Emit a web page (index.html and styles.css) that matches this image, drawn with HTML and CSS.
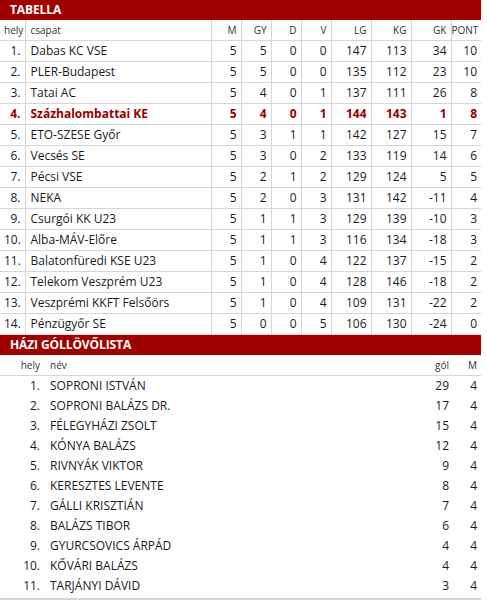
FILE: index.html
```html
<!DOCTYPE html>
<html lang="hu">
<head>
<meta charset="utf-8">
<title>Tabella</title>
<link rel="stylesheet" href="styles.css">
</head>
<body>
<div class="bar">TABELLA</div>
<table class="standings">
  <colgroup>
    <col class="c-pos"><col class="c-team"><col class="c-n"><col class="c-n"><col class="c-n"><col class="c-n"><col class="c-g"><col class="c-g"><col class="c-g"><col class="c-pt">
  </colgroup>
  <thead>
    <tr><th class="num">hely</th><th class="left">csapat</th><th class="num">M</th><th class="num">GY</th><th class="num">D</th><th class="num">V</th><th class="num">LG</th><th class="num">KG</th><th class="num">GK</th><th class="num">PONT</th></tr>
  </thead>
  <tbody>
    <tr><td class="num">1.</td><td class="team">Dabas KC VSE</td><td class="num">5</td><td class="num">5</td><td class="num">0</td><td class="num">0</td><td class="num">147</td><td class="num">113</td><td class="num">34</td><td class="num">10</td></tr>
    <tr><td class="num">2.</td><td class="team">PLER-Budapest</td><td class="num">5</td><td class="num">5</td><td class="num">0</td><td class="num">0</td><td class="num">135</td><td class="num">112</td><td class="num">23</td><td class="num">10</td></tr>
    <tr><td class="num">3.</td><td class="team">Tatai AC</td><td class="num">5</td><td class="num">4</td><td class="num">0</td><td class="num">1</td><td class="num">137</td><td class="num">111</td><td class="num">26</td><td class="num">8</td></tr>
    <tr class="own"><td class="num">4.</td><td class="team">Százhalombattai KE</td><td class="num">5</td><td class="num">4</td><td class="num">0</td><td class="num">1</td><td class="num">144</td><td class="num">143</td><td class="num">1</td><td class="num">8</td></tr>
    <tr><td class="num">5.</td><td class="team">ETO-SZESE Győr</td><td class="num">5</td><td class="num">3</td><td class="num">1</td><td class="num">1</td><td class="num">142</td><td class="num">127</td><td class="num">15</td><td class="num">7</td></tr>
    <tr><td class="num">6.</td><td class="team">Vecsés SE</td><td class="num">5</td><td class="num">3</td><td class="num">0</td><td class="num">2</td><td class="num">133</td><td class="num">119</td><td class="num">14</td><td class="num">6</td></tr>
    <tr><td class="num">7.</td><td class="team">Pécsi VSE</td><td class="num">5</td><td class="num">2</td><td class="num">1</td><td class="num">2</td><td class="num">129</td><td class="num">124</td><td class="num">5</td><td class="num">5</td></tr>
    <tr><td class="num">8.</td><td class="team">NEKA</td><td class="num">5</td><td class="num">2</td><td class="num">0</td><td class="num">3</td><td class="num">131</td><td class="num">142</td><td class="num">-11</td><td class="num">4</td></tr>
    <tr><td class="num">9.</td><td class="team">Csurgói KK U23</td><td class="num">5</td><td class="num">1</td><td class="num">1</td><td class="num">3</td><td class="num">129</td><td class="num">139</td><td class="num">-10</td><td class="num">3</td></tr>
    <tr><td class="num">10.</td><td class="team">Alba-MÁV-Előre</td><td class="num">5</td><td class="num">1</td><td class="num">1</td><td class="num">3</td><td class="num">116</td><td class="num">134</td><td class="num">-18</td><td class="num">3</td></tr>
    <tr><td class="num">11.</td><td class="team">Balatonfüredi KSE U23</td><td class="num">5</td><td class="num">1</td><td class="num">0</td><td class="num">4</td><td class="num">122</td><td class="num">137</td><td class="num">-15</td><td class="num">2</td></tr>
    <tr><td class="num">12.</td><td class="team">Telekom Veszprém U23</td><td class="num">5</td><td class="num">1</td><td class="num">0</td><td class="num">4</td><td class="num">128</td><td class="num">146</td><td class="num">-18</td><td class="num">2</td></tr>
    <tr><td class="num">13.</td><td class="team">Veszprémi KKFT Felsőörs</td><td class="num">5</td><td class="num">1</td><td class="num">0</td><td class="num">4</td><td class="num">109</td><td class="num">131</td><td class="num">-22</td><td class="num">2</td></tr>
    <tr><td class="num">14.</td><td class="team">Pénzügyőr SE</td><td class="num">5</td><td class="num">0</td><td class="num">0</td><td class="num">5</td><td class="num">106</td><td class="num">130</td><td class="num">-24</td><td class="num">0</td></tr>
  </tbody>
</table>
<div class="bar">HÁZI GÓLLÖVŐLISTA</div>
<table class="scorers">
  <colgroup>
    <col class="s-pos"><col class="s-name"><col class="s-goal"><col class="s-m">
  </colgroup>
  <thead>
    <tr><th class="num">hely</th><th class="left">név</th><th class="num">gól</th><th class="num">M</th></tr>
  </thead>
  <tbody>
    <tr><td class="num">1.</td><td class="name">SOPRONI ISTVÁN</td><td class="num">29</td><td class="num">4</td></tr>
    <tr><td class="num">2.</td><td class="name">SOPRONI BALÁZS DR.</td><td class="num">17</td><td class="num">4</td></tr>
    <tr><td class="num">3.</td><td class="name">FÉLEGYHÁZI ZSOLT</td><td class="num">15</td><td class="num">4</td></tr>
    <tr><td class="num">4.</td><td class="name">KÓNYA BALÁZS</td><td class="num">12</td><td class="num">4</td></tr>
    <tr><td class="num">5.</td><td class="name">RIVNYÁK VIKTOR</td><td class="num">9</td><td class="num">4</td></tr>
    <tr><td class="num">6.</td><td class="name">KERESZTES LEVENTE</td><td class="num">8</td><td class="num">4</td></tr>
    <tr><td class="num">7.</td><td class="name">GÁLLI KRISZTIÁN</td><td class="num">7</td><td class="num">4</td></tr>
    <tr><td class="num">8.</td><td class="name">BALÁZS TIBOR</td><td class="num">6</td><td class="num">4</td></tr>
    <tr><td class="num">9.</td><td class="name">GYURCSOVICS ÁRPÁD</td><td class="num">4</td><td class="num">4</td></tr>
    <tr><td class="num">10.</td><td class="name">KŐVÁRI BALÁZS</td><td class="num">4</td><td class="num">4</td></tr>
    <tr class="last"><td class="num">11.</td><td class="name">TARJÁNYI DÁVID</td><td class="num">3</td><td class="num">4</td></tr>
  </tbody>
</table>
</body>
</html>
```
FILE: styles.css
```css
html, body {
  margin: 0;
  padding: 0;
  background: #ffffff;
}
body {
  font-family: "Open Sans", "Noto Sans", sans-serif;
  font-size: 12px;
  color: #1a1a1a;
  width: 481px;
}
.bar {
  height: 20px;
  line-height: 20px;
  background: #a00000;
  color: #ffffff;
  font-weight: 700;
  font-size: 12px;
  padding-left: 10px;
  letter-spacing: -0.1px;
}
table {
  width: 481px;
  border-collapse: collapse;
  table-layout: fixed;
}
th {
  font-weight: 400;
  font-size: 10px;
  color: #333333;
  height: 20px;
  padding: 0 4px;
  line-height: 20px;
  white-space: nowrap;
  overflow: hidden;
}
td {
  height: 20px;
  padding: 0 4px;
  line-height: 20px;
  white-space: nowrap;
  overflow: hidden;
}
.num { text-align: right; }
.left { text-align: left; }

.standings th,
.standings td {
  border: 1px solid #d6d6d6;
}
.standings tr > :first-child { border-left: none; }
.standings tr > :last-child { border-right: none; }
.standings thead th { border-top: none; }
.standings th.left { padding-left: 5px; }
.standings td.team { padding-left: 5px; }
.standings .own td {
  color: #990000;
  font-weight: 700;
}
.standings th:last-child { padding-left: 0; padding-right: 4px; }
.c-pos { width: 25px; }
.c-team { width: 186px; }
.c-n { width: 30px; }
.c-g { width: 40px; }
.c-pt { width: 30px; }

.scorers thead th {
  border-bottom: 1px solid #d6d6d6;
}
.scorers {
  border-bottom: 2px solid #d6d6d6;
}
.scorers .last td { padding-bottom: 2px; }
.scorers th.left,
.scorers td.name { padding-left: 6px; }
.s-pos { width: 44px; }
.s-name { width: auto; }
.s-goal { width: 80px; }
.s-m { width: 28px; }
```
